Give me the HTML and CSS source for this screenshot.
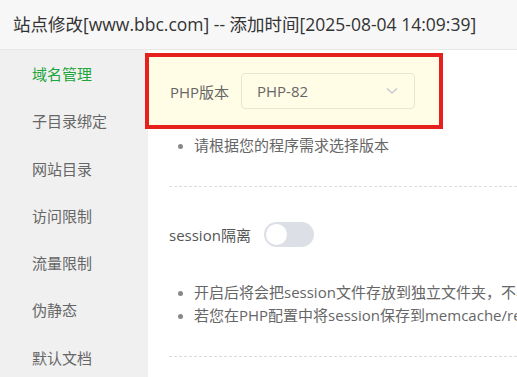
FILE: index.html
```html
<!DOCTYPE html>
<html lang="zh-CN">
<head>
<meta charset="utf-8">
<link rel="stylesheet" href="styles.css">
</head>
<body>
<div class="header">站点修改[www.bbc.com] -- 添加时间[2025-08-04 14:09:39]</div>
<div class="body">
  <nav class="sidebar">
    <div class="item active">域名管理</div>
    <div class="item">子目录绑定</div>
    <div class="item">网站目录</div>
    <div class="item">访问限制</div>
    <div class="item">流量限制</div>
    <div class="item">伪静态</div>
    <div class="item">默认文档</div>
  </nav>
  <main class="main">
    <div class="hl-row">
      <span class="label">PHP版本</span>
      <div class="select">
        <span>PHP-82</span>
        <svg class="chev" width="12" height="8" viewBox="0 0 12 8"><path d="M1 1.5 L6 6 L11 1.5" fill="none" stroke="#c0c4cc" stroke-width="1.2"/></svg>
      </div>
    </div>
    <ul class="tips first">
      <li>请根据您的程序需求选择版本</li>
    </ul>
    <div class="divider"></div>
    <div class="session-row">
      <span class="label2">session隔离</span>
      <span class="toggle"><span class="knob"></span></span>
    </div>
    <ul class="tips second">
      <li>开启后将会把session文件存放到独立文件夹，不与其他站点公用存储位置</li>
      <li>若您在PHP配置中将session保存到memcache/redis等缓存器时，请不要开启</li>
    </ul>
    <div class="divider d2"></div>
  </main>
</div>
</body>
</html>
```
FILE: styles.css
```css
* { box-sizing: border-box; }
html, body { margin: 0; padding: 0; overflow: hidden; }
body {
  width: 517px; height: 377px;
  font-family: "Open Sans", "Noto Sans CJK SC", sans-serif;
  background: #fff;
}
.header {
  height: 50px;
  background: #f7f7f7;
  border-bottom: 1px solid #e8e8e8;
  padding-left: 13px;
  font-size: 17.5px;
  line-height: 49px;
  color: #333;
  white-space: nowrap;
}
.body { display: flex; height: 327px; }
.sidebar {
  width: 148px;
  flex: none;
  background: #f0f0f0;
  padding-top: 1px;
}
.item {
  height: 47.3px;
  line-height: 47px;
  padding-left: 32px;
  font-size: 15px;
  color: #666;
}
.item.active { color: #20a53a; }
.main {
  flex: 1;
  padding: 7px 0 0 1px;
  min-width: 0;
}
.hl-row {
  width: 290px;
  height: 68px;
  background: #fffde6;
  outline: 4px solid #e5201d;
  display: flex;
  align-items: center;
  padding-left: 21px;
  position: relative;
}
.label { width: 71px; font-size: 15px; color: #666; }
.select {
  width: 174px; height: 36px;
  border: 1px solid #e8e6d0;
  border-radius: 4px;
  display: flex; align-items: center; justify-content: space-between;
  padding: 0 16px 0 15px;
  font-size: 15px; color: #666;
}
.tips {
  list-style: none;
  margin: 0;
  padding: 0 0 0 27px;
  font-size: 15px;
  color: #666;
  white-space: nowrap;
}
.tips li { position: relative; padding-left: 18px; line-height: 23px; }
.tips li::before {
  content: "";
  position: absolute;
  left: 2px; top: 10px;
  width: 5px; height: 5px;
  border-radius: 50%;
  background: #888;
}
.tips.first { margin-top: 9px; }
.divider {
  margin: 29px 0 0 20px;
  border-top: 1px dashed #dcdcdc;
}
.session-row {
  display: flex; align-items: center;
  margin-top: 35px;
  padding-left: 20px;
  height: 25px;
}
.label2 { width: 95px; font-size: 15px; color: #555; }
.toggle {
  width: 50px; height: 25px;
  border-radius: 13px;
  background: #dcdfe6;
  position: relative;
}
.knob {
  position: absolute; left: 2px; top: 2px;
  width: 21px; height: 21px; border-radius: 50%;
  background: #fff;
}
.tips.second { margin-top: 34px; }
.divider.d2 { margin-top: 29px; }
```
